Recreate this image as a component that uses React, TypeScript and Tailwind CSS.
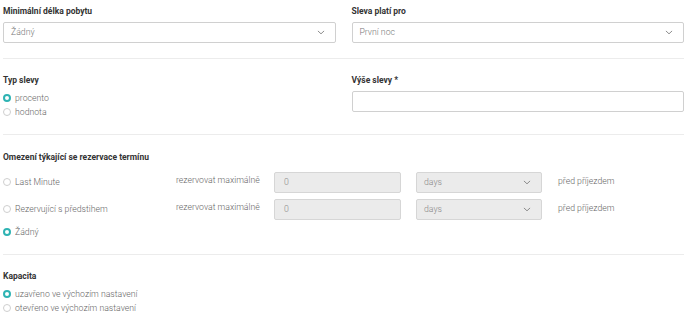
import { ReactNode } from "react";

function Chevron() {
  return (
    <svg width="8" height="5" viewBox="0 0 8 5" className="shrink-0">
      <path d="M1.2 1.2l2.8 2.6 2.8-2.6" fill="none" stroke="#808080" strokeWidth="0.9" strokeLinecap="round" strokeLinejoin="round" />
    </svg>
  );
}

function Label({ children }: { children: ReactNode }) {
  return <div className="h-[10px] text-[8.5px] leading-[10px] font-bold text-[#333]">{children}</div>;
}

function Select({ value, disabled = false, className = "" }: { value: string; disabled?: boolean; className?: string }) {
  return (
    <div
      className={`flex h-[21px] items-center justify-between rounded-[2px] border pl-[7px] pr-[10px] text-[8.7px] font-light ${
        disabled ? "border-[#d6d6d6] bg-[#ebebeb] text-[#888]" : "border-[#d0d0d0] bg-white text-[#777]"
      } ${className}`}
    >
      <span>{value}</span>
      <Chevron />
    </div>
  );
}

function Radio({ label, checked = false }: { label: string; checked?: boolean }) {
  return (
    <div className="flex h-[14px] items-center gap-[4px]">
      {checked ? (
        <span className="h-[8px] w-[8px] shrink-0 rounded-full border-[2.5px] border-[#2fb3b3] bg-white" />
      ) : (
        <span className="h-[8px] w-[8px] shrink-0 rounded-full border border-[#cfcfcf] bg-white" />
      )}
      <span className="text-[8.7px] leading-[10px] font-light text-[#666]">{label}</span>
    </div>
  );
}

function Divider({ className = "" }: { className?: string }) {
  return <div className={`border-t border-[#ececec] ${className}`} />;
}

function LimitRow({ label }: { label: string }) {
  return (
    <div className="flex h-[21px] items-start">
      <div className="w-[173px] pt-[5px]">
        <div className="flex items-center gap-[4px]">
          <span className="h-[8px] w-[8px] shrink-0 rounded-full border border-[#cfcfcf] bg-white" />
          <span className="text-[8.7px] leading-[10px] font-light text-[#666]">{label}</span>
        </div>
      </div>
      <div className="w-[98px] pt-[3px] text-[8.7px] leading-[10px] font-light text-[#666]">rezervovat maximálně</div>
      <div className="flex h-[21px] w-[127px] items-center rounded-[2px] border border-[#d6d6d6] bg-[#ebebeb] pl-[9px] text-[8.7px] font-light text-[#888]">
        0
      </div>
      <Select value="days" disabled className="ml-[15px] w-[126px]" />
      <div className="ml-[16px] pt-[4px] text-[8.7px] leading-[10px] font-light text-[#666]">před příjezdem</div>
    </div>
  );
}

export default function App() {
  return (
    <div className="h-[319px] w-[688px] overflow-hidden bg-white pt-[6px] pr-[4px] pl-[3px] font-['Roboto',sans-serif]">
      <div className="grid grid-cols-2 gap-x-[16px]">
        <div>
          <Label>Minimální délka pobytu</Label>
          <Select value="Žádný" className="mt-[6px]" />
        </div>
        <div>
          <Label>Sleva platí pro</Label>
          <Select value="První noc" className="mt-[6px]" />
        </div>
      </div>

      <Divider className="mt-[15px]" />

      <div className="mt-[16px] grid grid-cols-2 gap-x-[16px]">
        <div>
          <Label>Typ slevy</Label>
          <div className="mt-[6px]">
            <Radio label="procento" checked />
            <Radio label="hodnota" />
          </div>
        </div>
        <div>
          <Label>Výše slevy *</Label>
          <div className="mt-[6px] h-[21px] rounded-[2px] border border-[#d0d0d0] bg-white" />
        </div>
      </div>

      <Divider className="mt-[15px]" />

      <div className="mt-[17px]">
        <Label>Omezení týkající se rezervace termínu</Label>
        <div className="mt-[10px] flex flex-col gap-[6px]">
          <LimitRow label="Last Minute" />
          <LimitRow label="Rezervující s předstihem" />
        </div>
        <div className="mt-[5px]">
          <Radio label="Žádný" checked />
        </div>
      </div>

      <Divider className="mt-[15px]" />

      <div className="mt-[16px]">
        <Label>Kapacita</Label>
        <div className="mt-[6px]">
          <Radio label="uzavřeno ve výchozím nastavení" checked />
          <Radio label="otevřeno ve výchozím nastavení" />
        </div>
      </div>
    </div>
  );
}
